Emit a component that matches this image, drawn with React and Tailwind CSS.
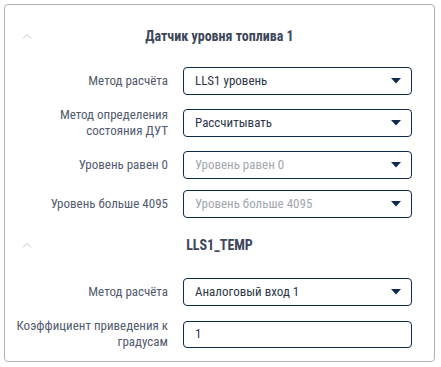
import React from 'react';

const FONT = { fontFamily: "'Roboto Condensed', Roboto, 'Liberation Sans', sans-serif" };

const Chevron = () => (
  <svg width="10" height="6" viewBox="0 0 10 6" className="absolute left-[17px] top-1/2 -translate-y-1/2">
    <polyline points="1,5.5 5,1.5 9,5.5" fill="none" stroke="#c4c4c4" strokeWidth="1" />
  </svg>
);

const Caret = () => (
  <svg width="10" height="6" viewBox="0 0 10 6" className="shrink-0">
    <polygon points="0,0 10,0 5,5.5" fill="#0d2a4f" />
  </svg>
);

const SectionTitle = ({ children, className }) => (
  <div className={`relative h-5 flex items-center justify-center ${className}`}>
    <Chevron />
    <span className="text-[14px] font-bold text-[#3c475a] leading-5">{children}</span>
  </div>
);

const Label = ({ children }) => (
  <div className="w-[163px] shrink-0 text-right text-[13px] leading-4 text-[#535b6e]">{children}</div>
);

const Select = ({ value, placeholder }) => (
  <div className="w-[229px] h-[28px] flex items-center justify-between pl-[11px] pr-[10px] border border-[#0d2a4f] rounded-[4px] bg-white">
    <span className={`text-[13px] ${value ? 'text-[#2e3748]' : 'text-[#a3a7ae]'}`}>{value || placeholder}</span>
    <Caret />
  </div>
);

const Row = ({ label, children, className = '' }) => (
  <div className={`flex items-center gap-[15px] ${className}`}>
    <Label>{label}</Label>
    {children}
  </div>
);

export default function App() {
  return (
    <div className="w-[441px] h-[367px] bg-white p-1" style={FONT}>
      <div className="w-[431px] h-[358px] border border-[#b3b3b3] rounded-[4px] pt-[21px]">
        <SectionTitle>Датчик уровня топлива 1</SectionTitle>

        <Row label="Метод расчёта" className="mt-[21px]">
          <Select value="LLS1 уровень" />
        </Row>
        <Row label={<>Метод определения<br />состояния ДУТ</>} className="mt-3">
          <Select value="Рассчитывать" />
        </Row>
        <Row label="Уровень равен 0" className="mt-3">
          <Select placeholder="Уровень равен 0" />
        </Row>
        <Row label="Уровень больше 4095" className="mt-[11px]">
          <Select placeholder="Уровень больше 4095" />
        </Row>

        <SectionTitle className="mt-[17px]">LLS1_TEMP</SectionTitle>

        <Row label="Метод расчёта" className="mt-[23px]">
          <Select value="Аналоговый вход 1" />
        </Row>
        <Row label={<>Коэффициент приведения к<br />градусам</>} className="mt-3">
          <div className="w-[229px] h-[27px] flex items-center pl-[11px] border border-[#0d2a4f] rounded-[4px] text-[13px] text-[#2e3748]">
            1
          </div>
        </Row>
      </div>
    </div>
  );
}
